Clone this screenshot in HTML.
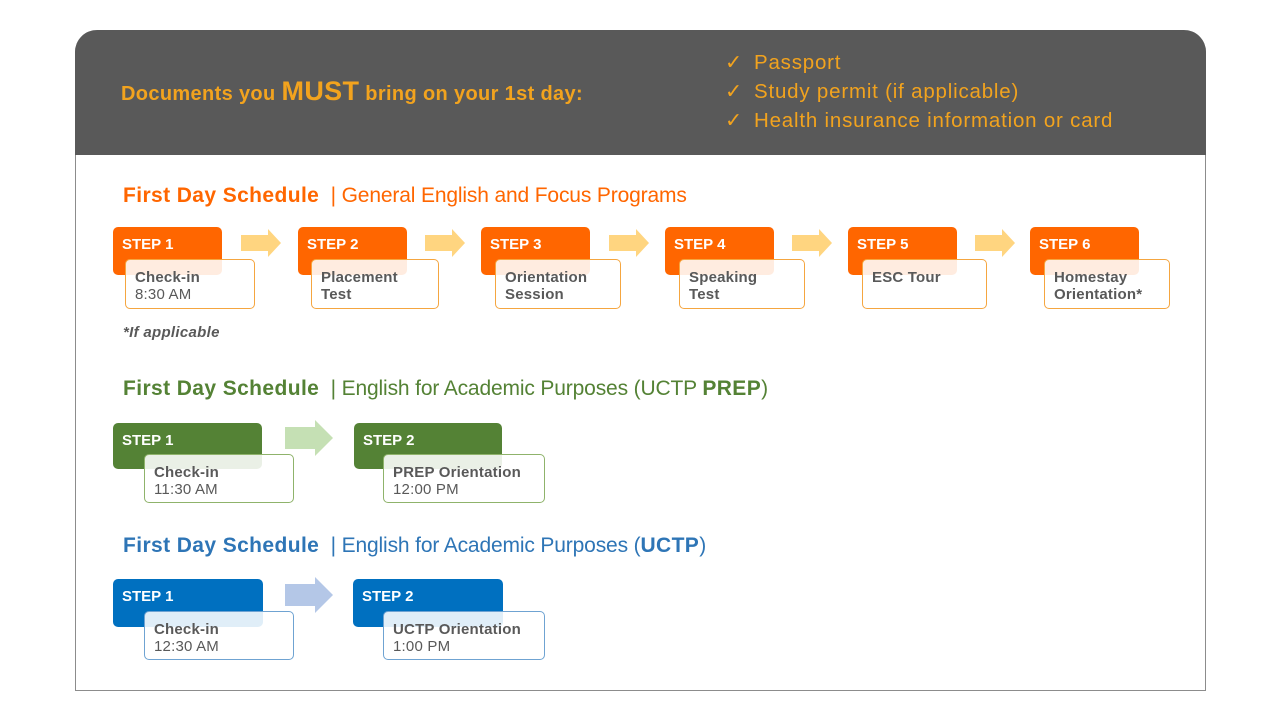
<!DOCTYPE html>
<html><head><meta charset="utf-8"><style>
*{margin:0;padding:0;box-sizing:border-box}
body{width:1280px;height:720px;background:#fff;position:relative;overflow:hidden;font-family:"Liberation Sans",sans-serif;}
.card{position:absolute;left:75px;top:30px;width:1131px;height:661px;border:1px solid #8c8c8c;border-top:none;border-radius:22px 22px 0 0}
.hdr{position:absolute;left:75px;top:30px;width:1131px;height:125px;background:#595959;border-radius:22px 22px 0 0}
.a{position:absolute;white-space:nowrap}
.doc{color:#f2a31e;font-weight:bold;font-size:20px;left:121px;top:76px;letter-spacing:0.35px}
.doc b{font-size:27px;}
.li{color:#f2a31e;font-size:20.5px;left:725px;letter-spacing:0.8px}
.li span{display:inline-block;width:29px}
.ttl{font-size:21px;letter-spacing:-0.15px}
.ttl b{letter-spacing:0.4px}
.s{position:absolute;border-radius:5px;color:#fff;font-weight:bold;font-size:15px;padding:9px 0 0 9px}
.w{position:absolute;border-radius:5px;background:rgba(255,255,255,0.88);font-size:15px;color:#595959;padding:9px 0 0 9px;line-height:17px;letter-spacing:0.2px}
.w b{color:#595959}
.o{background:#ff6600}.ow{border:1px solid #f5a640}
.g{background:#548235}.gw{border:1px solid #8fb36b}
.bl{background:#0070c0}.bw{border:1px solid #6fa3d2}
</style></head><body>
<div class="card"></div>
<div class="hdr"></div>
<div class="a doc">Documents you <b>MUST</b> bring on your 1st day:</div>
<div class="a li" style="top:50px"><span>✓</span>Passport</div>
<div class="a li" style="top:79px"><span>✓</span>Study permit (if applicable)</div>
<div class="a li" style="top:108px"><span>✓</span>Health insurance information or card</div>

<div class="a ttl" style="left:123px;top:184px;color:#ff6600"><b>First Day Schedule</b> &nbsp;| General English and Focus Programs</div>

<svg class="a" style="left:0;top:0" width="1280" height="720">
<g fill="#ffd580">
<polygon points="241,235 268,235 268,229 281,243 268,257 268,251 241,251"/>
<polygon points="425,235 452,235 452,229 465,243 452,257 452,251 425,251"/>
<polygon points="609,235 636,235 636,229 649,243 636,257 636,251 609,251"/>
<polygon points="792,235 819,235 819,229 832,243 819,257 819,251 792,251"/>
<polygon points="975,235 1002,235 1002,229 1015,243 1002,257 1002,251 975,251"/>
</g>
<polygon fill="#c5e0b4" points="285,427 315,427 315,420 333,438 315,456 315,449 285,449"/>
<polygon fill="#b4c7e7" points="285,584 315,584 315,577 333,595 315,613 315,606 285,606"/>
</svg>

<div class="s o" style="left:113px;top:227px;width:109px;height:48px">STEP 1</div>
<div class="w ow" style="left:125px;top:259px;width:130px;height:50px"><b>Check-in</b><br>8:30 AM</div>
<div class="s o" style="left:298px;top:227px;width:109px;height:48px">STEP 2</div>
<div class="w ow" style="left:311px;top:259px;width:128px;height:50px"><b>Placement<br>Test</b></div>
<div class="s o" style="left:481px;top:227px;width:109px;height:48px">STEP 3</div>
<div class="w ow" style="left:495px;top:259px;width:126px;height:50px"><b>Orientation<br>Session</b></div>
<div class="s o" style="left:665px;top:227px;width:109px;height:48px">STEP 4</div>
<div class="w ow" style="left:679px;top:259px;width:126px;height:50px"><b>Speaking<br>Test</b></div>
<div class="s o" style="left:848px;top:227px;width:109px;height:48px">STEP 5</div>
<div class="w ow" style="left:862px;top:259px;width:125px;height:50px"><b>ESC Tour</b></div>
<div class="s o" style="left:1030px;top:227px;width:109px;height:48px">STEP 6</div>
<div class="w ow" style="left:1044px;top:259px;width:126px;height:50px"><b>Homestay<br>Orientation*</b></div>
<div class="a" style="left:123px;top:324px;font-size:15px;font-weight:bold;font-style:italic;color:#595959;letter-spacing:0.3px">*If applicable</div>

<div class="a ttl" style="left:123px;top:377px;color:#548235"><b>First Day Schedule</b> &nbsp;| English for Academic Purposes (UCTP <b>PREP</b>)</div>
<div class="s g" style="left:113px;top:423px;width:149px;height:46px">STEP 1</div>
<div class="w gw" style="left:144px;top:454px;width:150px;height:49px"><b>Check-in</b><br>11:30 AM</div>
<div class="s g" style="left:354px;top:423px;width:148px;height:46px">STEP 2</div>
<div class="w gw" style="left:383px;top:454px;width:162px;height:49px"><b>PREP Orientation</b><br>12:00 PM</div>

<div class="a ttl" style="left:123px;top:534px;color:#2e75b6"><b>First Day Schedule</b> &nbsp;| English for Academic Purposes (<b>UCTP</b>)</div>
<div class="s bl" style="left:113px;top:579px;width:150px;height:48px">STEP 1</div>
<div class="w bw" style="left:144px;top:611px;width:150px;height:49px"><b>Check-in</b><br>12:30 AM</div>
<div class="s bl" style="left:353px;top:579px;width:150px;height:48px">STEP 2</div>
<div class="w bw" style="left:383px;top:611px;width:162px;height:49px"><b>UCTP Orientation</b><br>1:00 PM</div>
</body></html>
